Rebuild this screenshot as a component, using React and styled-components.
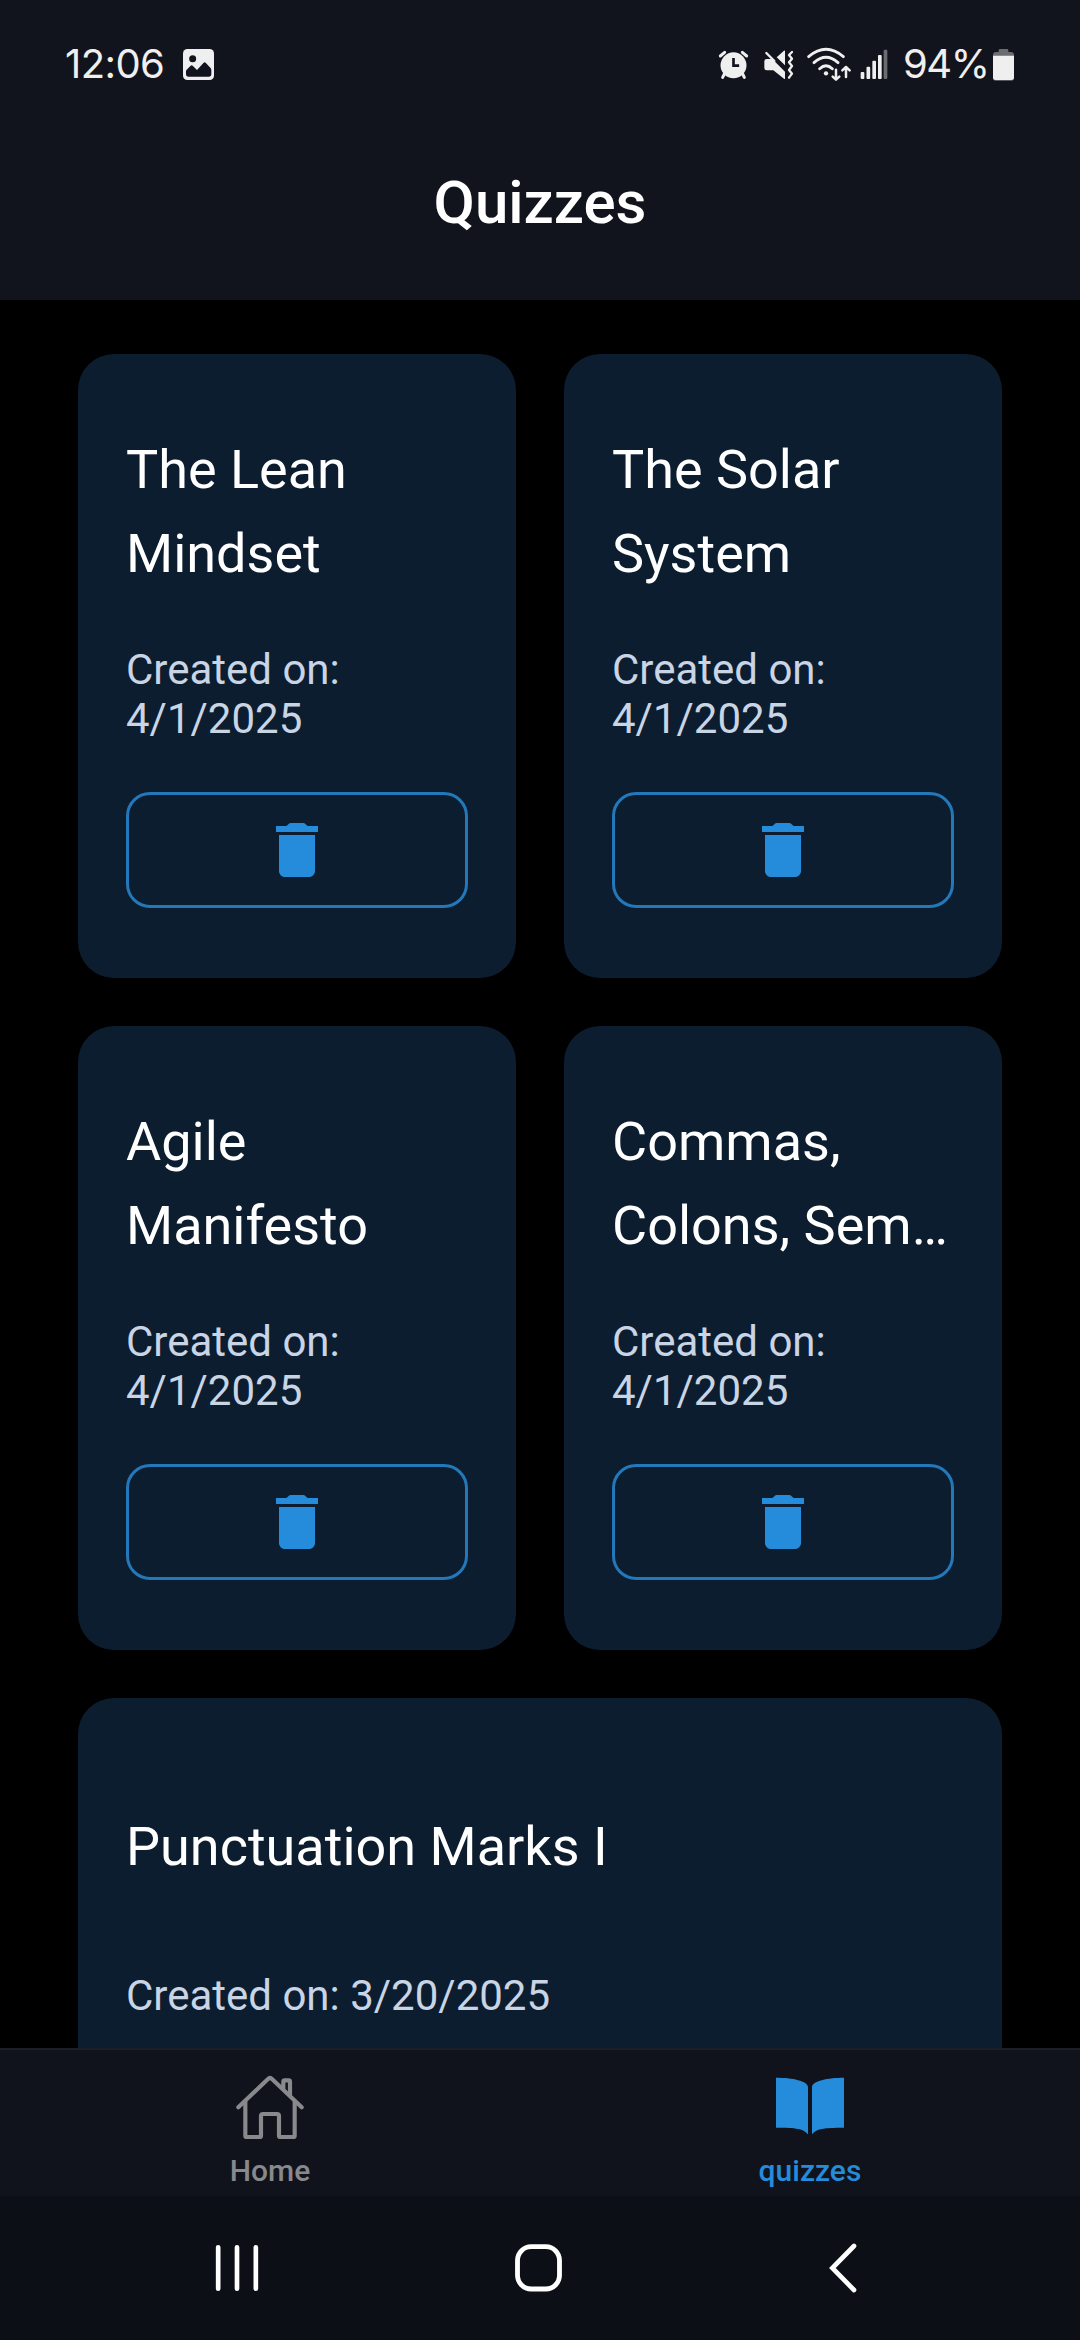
import React from "react";
import styled, { createGlobalStyle } from "styled-components";

const color = {
  header: "#11141d",
  tabs: "#10131b",
  nav: "#0c0f16",
  card: "#0c1d30",
  blue: "#258bdb",
  outline: "#2278b9",
  muted: "#c9d4e4",
  inactive: "#88898d",
  status: "#efefef",
};

const GlobalStyle = createGlobalStyle`
  html, body { margin: 0; background: #000; }
  * { box-sizing: border-box; }
  svg { display: block; flex: none; }
`;

const Screen = styled.div`
  width: 1080px;
  height: 2340px;
  display: flex;
  flex-direction: column;
  overflow: hidden;
  background: #000;
  color: #fff;
  font-family: Roboto, "Liberation Sans", sans-serif;
`;

const Header = styled.header`
  flex: none;
  height: 300px;
  background: ${color.header};
`;

const StatusBar = styled.div`
  display: flex;
  justify-content: space-between;
  height: 105px;
  padding: 45px 65px 0 65px;
  color: ${color.status};
`;

const StatusGroup = styled.div`
  display: flex;
  align-items: flex-start;
`;

const StatusText = styled.span`
  width: ${(p) => p.$width}px;
  margin-left: ${(p) => p.$left || 0}px;
  font-family: Inter, Roboto, sans-serif;
  font-size: 40px;
  line-height: 37px;
  letter-spacing: ${(p) => p.$spacing}px;
  white-space: nowrap;
`;

const StatusSvg = styled.svg`
  height: 37px;
  width: ${(p) => p.$width}px;
  margin-left: ${(p) => p.$left || 0}px;
`;

const PageTitle = styled.h1`
  margin: 0;
  padding-top: 62px;
  font-size: 60px;
  font-weight: 500;
  line-height: 72px;
  text-align: center;
`;

const List = styled.main`
  flex: 1;
  min-height: 0;
  overflow: hidden;
  display: grid;
  grid-template-columns: 438px 438px;
  grid-auto-rows: 624px;
  gap: 48px;
  padding: 54px 78px 0;
`;

const Card = styled.article`
  grid-column: ${(p) => (p.$wide ? "1 / -1" : "auto")};
  display: flex;
  flex-direction: column;
  gap: ${(p) => (p.$wide ? 82 : 49)}px;
  padding: ${(p) => (p.$wide ? 107 : 74)}px 48px 0;
  border-radius: 36px;
  background: ${color.card};
`;

const CardTitle = styled.h2`
  margin: 0;
  flex: none;
  font-size: 54px;
  font-weight: 400;
  line-height: 84px;
`;

const Created = styled.p`
  margin: 0;
  flex: none;
  color: ${color.muted};
  font-size: 42px;
  line-height: 49px;
`;

const DeleteButton = styled.button`
  flex: none;
  display: flex;
  align-items: center;
  justify-content: center;
  height: 116px;
  padding: 0;
  border: 3px solid ${color.outline};
  border-radius: 24px;
  background: transparent;
  color: ${color.blue};
`;

const TabBar = styled.nav`
  flex: none;
  display: grid;
  grid-template-columns: 1fr 1fr;
  height: 148px;
  border-top: 2px solid #1a1f29;
  background: ${color.tabs};
`;

const Tab = styled.div`
  display: flex;
  flex-direction: column;
  align-items: center;
  padding-top: 22px;
  color: ${(p) => (p.$active ? color.blue : color.inactive)};
`;

const TabLabel = styled.span`
  margin-top: 11px;
  font-size: 30px;
  font-weight: 500;
  line-height: 36px;
`;

const SystemNav = styled.footer`
  flex: none;
  display: grid;
  grid-template-columns: repeat(3, 1fr);
  place-items: center;
  height: 144px;
  padding: 0 86px;
  background: ${color.nav};
`;

const PictureIcon = () => (
  <StatusSvg $width={33} $left={14} viewBox="426 45 99 111">
    <rect x="429" y="57" width="93" height="93" rx="13" fill="currentColor" />
    <circle cx="458" cy="86" r="10.5" fill={color.header} />
    <path
      d="M438 124q0-3 2-5l12-12q3-3 6 0l13 13 20-22q3-3 6 0l14 15q3 3 3 7v12q0 8-8 8H446q-8 0-8-8z"
      fill={color.header}
    />
  </StatusSvg>
);

const AlarmIcon = () => (
  <StatusSvg $width={33} viewBox="48 45 99 111">
    <circle cx="97.5" cy="106" r="39" fill="currentColor" />
    <g fill="none" stroke="currentColor" strokeWidth="9" strokeLinecap="round">
      <path d="M58 78l13-11M124 67l13 11M70 132l-5 10M125 132l5 10" />
    </g>
    <path d="M97.500 84v23h17" fill="none" stroke={color.header} strokeWidth="8" />
  </StatusSvg>
);

const MuteIcon = () => (
  <StatusSvg $width={32} $left={13} viewBox="186 45 96 111">
    <path
      d="M197 87h17l38 38v21q0 2-3 0l-32-25h-20q-7 0-7-7V94q0-7 7-7zM227 82l22-20q3-2 3 1v43z"
      fill="currentColor"
    />
    <g fill="none" stroke="currentColor" strokeWidth="7" strokeLinecap="round" strokeLinejoin="round">
      <path d="M196 69l24 24" />
      <path d="M273 66l-9 9 9 11-9 11 9 11-9 12 9 11-9 12" />
    </g>
  </StatusSvg>
);

const WifiIcon = () => (
  <StatusSvg $width={46} $left={11} viewBox="316 45 138 111">
    <g fill="none" stroke="currentColor" strokeWidth="8.500" strokeLinecap="round" strokeLinejoin="round">
      <path d="M324 80q52-44 104 0M340 98q36-32 72 0M357 116q19-18 38 0" />
      <path d="M406 119v29M396 140l10 9 10-9M436 141v-30M425 121l11-10 11 10" strokeWidth="7.500" />
    </g>
    <circle cx="376" cy="130" r="6.500" fill="currentColor" />
  </StatusSvg>
);

const SignalIcon = () => (
  <StatusSvg $width={28} $left={8} viewBox="478 45 84 111">
    <g fill="currentColor">
      <rect x="480" y="126" width="11" height="21" rx="3" />
      <rect x="497.500" y="110" width="11" height="37" rx="3" />
      <rect x="515" y="92" width="11" height="55" rx="3" />
      <rect x="532" y="75" width="11" height="72" rx="3" />
      <rect x="549" y="59" width="11" height="88" rx="3" opacity="0.4" />
    </g>
  </StatusSvg>
);

const BatteryIcon = () => (
  <StatusSvg $width={23} viewBox="876 45 69 111">
    <path
      d="M900 57h21q4 0 4 4v5h8q9 0 9 9v69q0 8-8 8h-47q-8 0-8-8V75q0-9 9-9h8v-5q0-4 4-4z"
      fill="currentColor"
      opacity="0.4"
    />
    <path d="M879 77h63v65q0 8-8 8h-47q-8 0-8-8z" fill="currentColor" />
  </StatusSvg>
);

const TrashIcon = () => (
  <svg width="72" height="72" viewBox="0 0 24 24" fill="currentColor">
    <path d="M6 19c0 1.100.9 2 2 2h8c1.100 0 2-.9 2-2V7H6v12zM19 4h-3.500l-.7-.7q-.3-.3-.7-.3H9.900q-.4 0-.7.3L8.500 4H5v2h14V4z" />
  </svg>
);

const HomeIcon = () => (
  <svg width="74" height="70" viewBox="99 95 222 210" fill="none" stroke="currentColor" strokeWidth="12.500" strokeLinecap="round" strokeLinejoin="round">
    <path d="M115 201l89-85q6-6 12 0l89 85" />
    <path d="M136 184v102q0 4 4 4h39q4 0 4-4v-59q0-6 6-6h42q6 0 6 6v59q0 4 4 4h39q4 0 4-4V184" />
    <path d="M250 144v-20q0-4 4-4h12q4 0 4 4v40" />
  </svg>
);

const BookIcon = () => (
  <svg width="74" height="70" viewBox="129 95 222 210" fill="currentColor">
    <path d="M138 112c48 0 96 10 96 28v142c-14-17-34-20-96-20z" />
    <path d="M342 112c-48 0-96 10-96 28v142c14-17 34-20 96-20z" />
  </svg>
);

const RecentsIcon = () => (
  <svg width="44" height="50" viewBox="105 69 132 150" fill="none" stroke="#fff" strokeWidth="14" strokeLinecap="round">
    <path d="M114.500 82v124M171 82v124M227.500 82v124" />
  </svg>
);

const HomeKeyIcon = () => (
  <svg width="49" height="50" viewBox="1006.500 69 147 150" fill="none" stroke="#fff" strokeWidth="14.500">
    <rect x="1014" y="80" width="126" height="127" rx="41" />
  </svg>
);

const BackIcon = () => (
  <svg width="30" height="50" viewBox="142 159 90 150" fill="none" stroke="#fff" strokeWidth="14" strokeLinecap="round">
    <path d="M220 168l-65 66 65 66" />
  </svg>
);

const quizzes = [
  { title: "The Lean Mindset", date: "4/1/2025" },
  { title: "The Solar System", date: "4/1/2025" },
  { title: "Agile Manifesto", date: "4/1/2025" },
  { title: "Commas, Colons, Sem…", date: "4/1/2025" },
  { title: "Punctuation Marks I", date: "3/20/2025", wide: true },
];

const QuizCard = ({ title, date, wide }) => (
  <Card $wide={wide}>
    <CardTitle>{title}</CardTitle>
    <Created>Created on: {date}</Created>
    {!wide && (
      <DeleteButton aria-label="Delete">
        <TrashIcon />
      </DeleteButton>
    )}
  </Card>
);

export default function App() {
  return (
    <Screen>
      <GlobalStyle />
      <Header>
        <StatusBar>
          <StatusGroup>
            <StatusText $width={103} $spacing={-0.6}>12:06</StatusText>
            <PictureIcon />
          </StatusGroup>
          <StatusGroup>
            <AlarmIcon />
            <MuteIcon />
            <WifiIcon />
            <SignalIcon />
            <StatusText $width={89} $left={15} $spacing={-1.5}>94%</StatusText>
            <BatteryIcon />
          </StatusGroup>
        </StatusBar>
        <PageTitle>Quizzes</PageTitle>
      </Header>
      <List>
        {quizzes.map((quiz) => (
          <QuizCard key={quiz.title} {...quiz} />
        ))}
      </List>
      <TabBar>
        <Tab>
          <HomeIcon />
          <TabLabel>Home</TabLabel>
        </Tab>
        <Tab $active>
          <BookIcon />
          <TabLabel>quizzes</TabLabel>
        </Tab>
      </TabBar>
      <SystemNav>
        <RecentsIcon />
        <HomeKeyIcon />
        <BackIcon />
      </SystemNav>
    </Screen>
  );
}
